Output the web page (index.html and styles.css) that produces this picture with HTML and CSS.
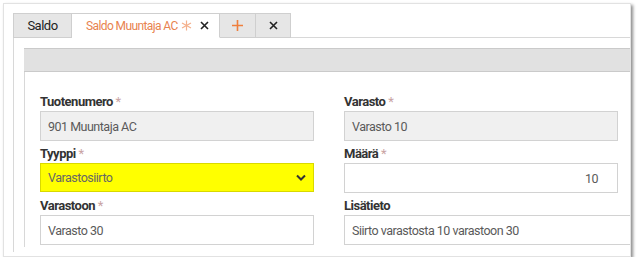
FILE: index.html
```html
<!DOCTYPE html>
<html lang="fi">
  <head>
    <meta charset="UTF-8" />
    <title>Saldo</title>
    <link rel="stylesheet" href="styles.css">
  </head>
  <body>
    <div class="window">
      <div class="tabs">
        <div class="tab first">Saldo</div>
        <div class="tab active">
          <span>Saldo Muuntaja AC</span>
          <svg class="dirty" width="11" height="11" viewBox="0 0 11 11"><path d="M5.5 0.5 V10.5 M1 3 L10 8 M1 8 L10 3" stroke="#f4b08c" stroke-width="1.2"/></svg>
          <svg class="close" width="9" height="9" viewBox="0 0 9 9"><path d="M1 1 L8 8 M8 1 L1 8" stroke="#222" stroke-width="1.6"/></svg>
        </div>
        <div class="tab plus">
          <svg width="11" height="11" viewBox="0 0 11 11"><path d="M5.5 0 V11 M0 5.5 H11" stroke="#ef7f3d" stroke-width="1.6"/></svg>
        </div>
        <div class="tab icon">
          <svg width="9" height="9" viewBox="0 0 9 9"><path d="M1 1 L8 8 M8 1 L1 8" stroke="#222" stroke-width="1.6"/></svg>
        </div>
        <div class="tab-rest"></div>
      </div>

      <div class="panel">
        <div class="toolbar"></div>
        <div class="form">
          <div class="field">
            <label>Tuotenumero <span class="req">*</span></label>
            <div class="input readonly">901 Muuntaja AC</div>
          </div>
          <div class="field">
            <label>Varasto <span class="req">*</span></label>
            <div class="input readonly">Varasto 10</div>
          </div>
          <div class="field">
            <label>Tyyppi <span class="req">*</span></label>
            <div class="input select">
              Varastosiirto
              <svg width="10" height="7" viewBox="0 0 10 7"><path d="M1 1.5 L5 5.5 L9 1.5" fill="none" stroke="#333" stroke-width="2"/></svg>
            </div>
          </div>
          <div class="field">
            <label>Määrä <span class="req">*</span></label>
            <div class="input number">10</div>
          </div>
          <div class="field">
            <label>Varastoon <span class="req">*</span></label>
            <div class="input">Varasto 30</div>
          </div>
          <div class="field wide">
            <label>Lisätieto</label>
            <div class="input">Siirto varastosta 10 varastoon 30</div>
          </div>
        </div>
      </div>
    </div>
  </body>
</html>
```

FILE: styles.css
```css
body {
  margin: 0;
  background-color: #fff;
  font-family: Roboto, "DejaVu Sans Condensed", sans-serif;
  font-size: 13px;
  letter-spacing: -0.5px;
  color: #333;
}
.window {
  margin: 3px 0 0 3px;
  width: 628px;
  height: 254px;
  border: 1px solid #e2e2e2;
  box-shadow: 2px 2px 3px rgba(0, 0, 0, 0.45);
  padding: 9px 0 0 9px;
  box-sizing: border-box;
  overflow: hidden;
  display: flex;
  flex-direction: column;
}
.tabs {
  display: flex;
  height: 25px;
}
.tab {
  display: flex;
  align-items: center;
  justify-content: center;
  background-color: #e6e6e6;
  border: 1px solid #cfcfcf;
  border-left: none;
  box-sizing: border-box;
  color: #222;
  flex-shrink: 0;
  white-space: nowrap;
}
.tab > * {
  flex-shrink: 0;
}
.tab.first {
  border-left: 1px solid #cfcfcf;
  width: 59px;
}
.tab.active {
  background-color: #fff;
  border-bottom-color: #fff;
  color: #e8834f;
  width: 148px;
  justify-content: flex-start;
  padding-left: 14px;
  font-size: 12px;
  letter-spacing: -0.6px;
}
.tab.active .dirty {
  margin-left: 3px;
}
.tab.active .close {
  margin-left: 8px;
}
.tab.plus {
  width: 36px;
}
.tab.icon {
  width: 35px;
}
.tab-rest {
  flex: 1;
  border-bottom: 1px solid #d8d8d8;
}
.panel {
  flex: 1;
  border-left: 1px solid #d8d8d8;
  padding: 10px 0 5px 10px;
  display: flex;
  flex-direction: column;
  margin-bottom: 4px;
}
.toolbar {
  height: 24px;
  background-color: #e1e1e1;
  border-top: 1px solid #cacaca;
  border-bottom: 1px solid #cacaca;
  box-sizing: border-box;
}
.form {
  flex: 1;
  border-left: 1px solid #d8d8d8;
  padding: 21px 0 0 15px;
  display: grid;
  grid-template-columns: 273px 300px;
  column-gap: 31px;
  row-gap: 4px;
  align-content: start;
}
.field label {
  display: block;
  font-weight: bold;
  color: #333;
  line-height: 17px;
  margin-bottom: 1px;
}
.req {
  color: #c9a3a3;
  font-weight: normal;
}
.input {
  height: 30px;
  border: 1px solid #d2d2d2;
  box-sizing: border-box;
  padding: 0 7px;
  display: flex;
  align-items: center;
  color: #5a5a5a;
  background-color: #fff;
  font-size: 12.5px;
}
.field:not(.wide) .input {
  width: 274px;
}
.input.readonly {
  background-color: #f0f0f0;
}
.input.select {
  background-color: #ffff00;
  border-color: #d9d900;
  justify-content: space-between;
  height: 29px;
  color: #666;
}
.input.number {
  justify-content: flex-end;
  padding-right: 19px;
}
```
